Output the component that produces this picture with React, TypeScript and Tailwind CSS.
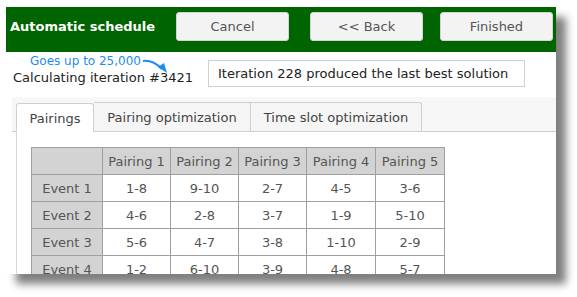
import React from "react";

const rows = [
  ["Event 1", "1-8", "9-10", "2-7", "4-5", "3-6"],
  ["Event 2", "4-6", "2-8", "3-7", "1-9", "5-10"],
  ["Event 3", "5-6", "4-7", "3-8", "1-10", "2-9"],
  ["Event 4", "1-2", "6-10", "3-9", "4-8", "5-7"],
];

export default function App() {
  const font = { fontFamily: '"DejaVu Sans", Verdana, sans-serif' };
  return (
    <div className="w-[577px] h-[297px] bg-white overflow-hidden relative" style={font}>
      <div className="absolute left-[6px] top-[7px] w-[550px] h-[267px] bg-white shadow-[10px_10px_8px_#808080] overflow-hidden flex flex-col">
        {/* header */}
        <div className="h-[45px] shrink-0 bg-[#006400] flex items-start pt-[5px] pl-[4px]">
          <div className="w-[166px] h-[29px] leading-[29px] text-white font-bold text-[13px] whitespace-nowrap">
            Automatic schedule
          </div>
          <button className="w-[113px] h-[29px] rounded-[3px] border border-[#d4d4d4] bg-[#f3f3f3] text-[#555] text-[13px]">
            Cancel
          </button>
          <button className="ml-[21px] w-[113px] h-[29px] rounded-[3px] border border-[#d4d4d4] bg-[#f3f3f3] text-[#555] text-[13px]">
            &lt;&lt; Back
          </button>
          <button className="ml-[17px] w-[113px] h-[29px] rounded-[3px] border border-[#d4d4d4] bg-[#f3f3f3] text-[#555] text-[13px]">
            Finished
          </button>
        </div>
        {/* iteration row */}
        <div className="h-[45px] shrink-0 flex relative">
          <div className="w-[202px] flex flex-col pt-[1px]">
            <div className="pl-[24px] text-[12px] leading-[17px] text-[#1e8cf0] whitespace-nowrap">Goes up to 25,000</div>
            <div className="pl-[7px] text-[13px] leading-[16px] text-[#222] whitespace-nowrap">Calculating iteration #3421</div>
          </div>
          <svg className="absolute left-[136px] top-[6px]" width="32" height="20" viewBox="0 0 32 20">
            <path d="M1 3 C 8 2, 14 5, 20 11" fill="none" stroke="#1e8cf0" strokeWidth="2" />
            <path d="M16 9 L25 15 L22 5 Z" fill="#1e8cf0" />
          </svg>
          <div className="mt-[8px] h-[27px] w-[317px] border border-[#d0d0d0] bg-white text-[13px] text-[#222] leading-[25px] pl-[9px] whitespace-nowrap">
            Iteration 228 produced the last best solution
          </div>
        </div>
        {/* tabs */}
        <div className="ml-[6px] flex flex-col flex-1">
          <div className="bg-[#f7f7f7] pl-[4px] pt-[6px] flex items-end border-b border-[#cfcfcf] h-[35px] shrink-0">
            <div className="w-[78px] h-[29px] -mb-px bg-white border border-[#cfcfcf] border-b-white rounded-t-[3px] text-[13px] text-[#444] leading-[29px] text-center">
              Pairings
            </div>
            <div className="w-[157px] h-[29px] bg-[#f5f5f5] border border-l-0 border-b-0 border-[#cfcfcf] text-[13px] text-[#444] leading-[29px] text-center whitespace-nowrap">
              Pairing optimization
            </div>
            <div className="w-[171px] h-[29px] bg-[#f5f5f5] border border-l-0 border-b-0 border-[#cfcfcf] rounded-tr-[3px] text-[13px] text-[#444] leading-[29px] text-center whitespace-nowrap">
              Time slot optimization
            </div>
          </div>
          <div className="ml-[4px] flex-1 border-l border-[#d3d8de] bg-white pl-[14px] pt-[15px]">
            <table className="border-collapse text-[13px] text-[#555]">
              <thead>
                <tr className="h-[27px]">
                  <th className="w-[71px] border border-[#a0a0a0] bg-[#d3d3d3] font-normal"></th>
                  {["Pairing 1", "Pairing 2", "Pairing 3", "Pairing 4", "Pairing 5"].map((p, i) => (
                    <th key={p} className={`${i >= 3 ? "w-[69px]" : "w-[68px]"} border border-[#a0a0a0] bg-[#d3d3d3] font-normal whitespace-nowrap p-0 pt-[2px]`}>
                      {p}
                    </th>
                  ))}
                </tr>
              </thead>
              <tbody>
                {rows.map((r) => (
                  <tr key={r[0]} className="h-[27px]">
                    {r.map((c, i) => (
                      <td key={i} className={`border border-[#a0a0a0] text-center p-0 pt-[2px] whitespace-nowrap ${i === 0 ? "bg-[#d3d3d3]" : "bg-white"}`}>
                        {c}
                      </td>
                    ))}
                  </tr>
                ))}
              </tbody>
            </table>
          </div>
        </div>
      </div>
    </div>
  );
}
